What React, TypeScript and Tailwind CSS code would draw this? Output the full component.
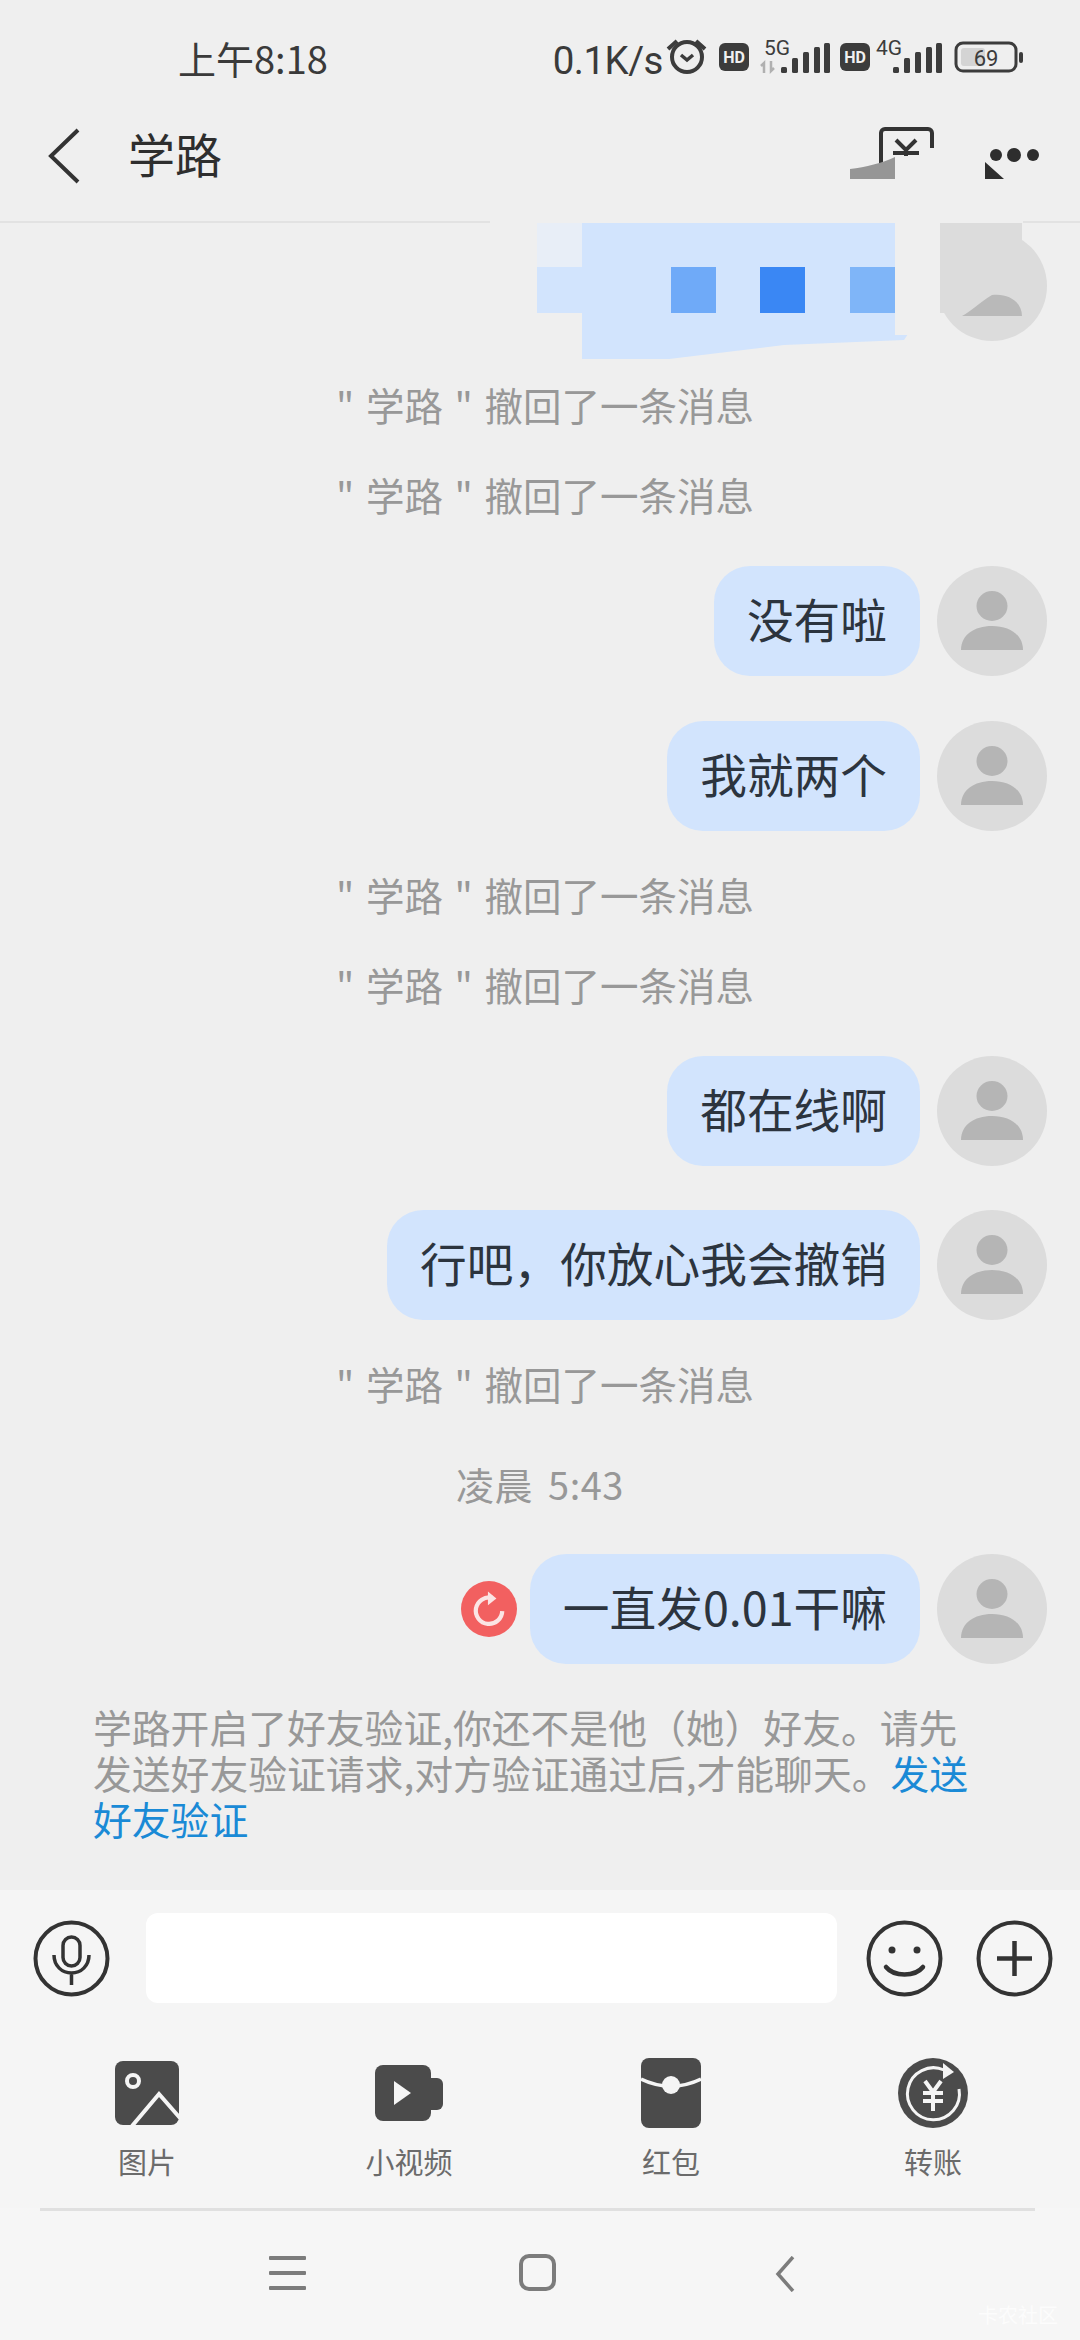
const font = { fontFamily: '"Noto Sans CJK SC", sans-serif' }

function Avatar() {
  return (
    <div className="flex w-[110px] h-[110px] shrink-0 items-center justify-center rounded-full bg-[#dcdcdc]">
      <svg width="62" height="60" viewBox="0 0 62 60" fill="#b5b5b5">
        <ellipse cx="31" cy="15" rx="15.5" ry="15" />
        <path d="M0 59c0-15 13-24 31-24s31 9 31 24z" />
      </svg>
    </div>
  )
}

function Bubble({ text, mt, retry }: { text: string; mt: string; retry?: boolean }) {
  return (
    <div className={`flex items-center justify-end gap-[17px] pr-[33px] ${mt}`}>
      {retry && (
        <div className="flex w-[56px] h-[56px] items-center justify-center rounded-full bg-[#f26060] mr-[-4px]">
          <svg width="36" height="36" viewBox="0 0 34 34" fill="none" stroke="#fbe4e4" strokeWidth="4">
            <path d="M20 6.5A12.5 12.5 0 1 0 29.5 19" />
            <path d="M16 0.5l8 6.500-8 6.500z" fill="#fbe4e4" stroke="none" />
          </svg>
        </div>
      )}
      <div className="flex h-[110px] items-center rounded-[36px] bg-[#d2e4fd] px-[33px] pb-[6px] text-[46.7px] text-[#2c343e] whitespace-nowrap">
        {text}
      </div>
      <Avatar />
    </div>
  )
}

function SystemNote({ mt }: { mt: string }) {
  return (
    <div className={`flex h-[60px] items-center justify-center pl-[10px] pb-[2px] text-[38.5px] [word-spacing:3px] text-[#989898] whitespace-pre ${mt}`}>
      {'" 学路 " 撤回了一条消息'}
    </div>
  )
}

function Bars({ x }: { x: number }) {
  const bars = [
    [0, 72, 6],
    [11, 63, 15],
    [22, 57, 21],
    [33, 52, 26],
    [43, 48, 30],
  ]
  return (
    <>
      {bars.map(([dx, y, h]) => (
        <rect key={dx} x={x + dx} y={y} width="6" height={h} rx="1.5" fill="#3c3c3c" />
      ))}
    </>
  )
}

function StatusIcons() {
  return (
    <svg width="360" height="48" viewBox="665 40 360 48" fill="none">
      <path d="M669 54l9-8M706 54l-9-8" stroke="#3c3c3c" strokeWidth="4" />
      <circle cx="688" cy="62" r="15" stroke="#3c3c3c" strokeWidth="4" />
      <path d="M682 60l6 5 6-5" stroke="#3c3c3c" strokeWidth="3.5" />
      <rect x="720" y="48" width="30" height="28" rx="6" fill="#3c3c3c" />
      <text x="735" y="68" textAnchor="middle" fontSize="16" fontWeight="700" fill="#f0f0f0" fontFamily="Roboto, sans-serif">HD</text>
      <text x="765" y="60" fontSize="21" fill="#3c3c3c" fontFamily="Roboto, sans-serif">5G</text>
      <path d="M765 78v-10l-3 3M772 66v10l3-3" stroke="#b0b0b0" strokeWidth="2.5" />
      <Bars x={782} />
      <rect x="841" y="48" width="30" height="28" rx="6" fill="#3c3c3c" />
      <text x="856" y="68" textAnchor="middle" fontSize="16" fontWeight="700" fill="#f0f0f0" fontFamily="Roboto, sans-serif">HD</text>
      <text x="877" y="60" fontSize="21" fill="#3c3c3c" fontFamily="Roboto, sans-serif">4G</text>
      <Bars x={894} />
      <rect x="957" y="48" width="60" height="28" rx="7" stroke="#3c3c3c" strokeWidth="3" />
      <rect x="962" y="53" width="24" height="18" rx="3" fill="#d4d4d4" />
      <text x="987" y="71" textAnchor="middle" fontSize="22" fill="#3c3c3c" fontFamily="Roboto, sans-serif">69</text>
      <rect x="1020" y="57" width="4" height="11" rx="2" fill="#3c3c3c" />
    </svg>
  )
}

function Redaction() {
  return (
    <svg className="absolute left-[537px] top-0" width="510" height="136" viewBox="537 224 510 136">
      <circle cx="992" cy="287" r="55" fill="#dcdcdc" />
      <path d="M582 224h313v112l17-7-8 12-120 5-115 14h-87z" fill="#d2e4fd" />
      <rect x="537" y="224" width="45" height="44" fill="#e8eef7" />
      <rect x="537" y="268" width="45" height="46" fill="#d2e4fd" />
      <rect x="671" y="268" width="45" height="46" fill="#6faaf8" />
      <rect x="760" y="268" width="45" height="46" fill="#3a87f4" />
      <rect x="850" y="268" width="45" height="46" fill="#7fb5f8" />
      <rect x="895" y="224" width="45" height="112" fill="#efefef" />
      <path d="M940 224h82v90h-82z" fill="#dcdcdc" />
      <path d="M962 317c8-4 18-14 30-21 18-2 30 8 30 21z" fill="#b9b9b9" />
    </svg>
  )
}

function Tool({ label, children }: { label: string; children: React.ReactNode }) {
  return (
    <div className="flex flex-col items-center">
      <div className="flex h-[72px] items-center justify-center">{children}</div>
      <div className="mt-[12px] text-[29px] leading-[40px] text-[#6b6b6b]">{label}</div>
    </div>
  )
}

export default function App() {
  return (
    <div className="relative flex flex-col w-[1080px] h-[2340px] overflow-hidden bg-[#efefef]" style={font}>
      {/* status bar */}
      <div className="flex h-[100px] items-start pt-[35px] pr-[56px] pl-[178px] text-[#3a3a3a]">
        <span className="text-[38px] leading-[46px] whitespace-nowrap">上午8:18</span>
        <span className="ml-auto mt-[3px] text-[38.5px] leading-[46px] tracking-[-0.5px]" style={{ fontFamily: 'Roboto, sans-serif' }}>0.1K/s</span>
        <span className="ml-[1px] block">
          <StatusIcons />
        </span>
      </div>

      {/* title bar */}
      <div className="relative flex h-[123px] items-center border-b-[2px] border-[#e2e2e2] pl-[48px]">
        <svg className="mt-[-10px]" width="32" height="56" viewBox="0 0 32 56" fill="none" stroke="#333" strokeWidth="4">
          <path d="M30 2L3 28l27 26" />
        </svg>
        <span className="ml-[48px] mt-[-14px] text-[47px] text-[#2e2e2e]">学路</span>
        <svg className="ml-auto mr-[4px] mt-[-16px]" width="90" height="58" viewBox="848 124 90 58" fill="none">
          <path d="M881 165v-32a4 4 0 0 1 4-4h43a4 4 0 0 1 4 4v15" stroke="#333" strokeWidth="4" />
          <path d="M896 140l10 10 10-10M893 153h26M906 148v8" stroke="#333" strokeWidth="4" />
          <path d="M850 179v-10c16-2 32-6 45-12v22z" fill="#969696" />
        </svg>
        <svg className="ml-[42px] mr-[38px] mt-[8px]" width="58" height="34" viewBox="984 148 58 34">
          <circle cx="996" cy="155" r="6" fill="#2e2e2e" />
          <circle cx="1014" cy="155" r="7" fill="#2e2e2e" />
          <circle cx="1033" cy="155" r="6" fill="#2e2e2e" />
          <path d="M985 162l19 17h-19z" fill="#2e2e2e" />
        </svg>
        <div className="absolute left-[490px] bottom-[-2px] w-[533px] h-[2px] bg-[#efefef]" />
      </div>

      {/* messages */}
      <div className="flex flex-1 flex-col">
        <div className="relative h-[134px] shrink-0">
          <Redaction />
        </div>
        <SystemNote mt="mt-[19px]" />
        <SystemNote mt="mt-[30px]" />
        <Bubble text="没有啦" mt="mt-[40px]" />
        <Bubble text="我就两个" mt="mt-[45px]" />
        <SystemNote mt="mt-[35px]" />
        <SystemNote mt="mt-[30px]" />
        <Bubble text="都在线啊" mt="mt-[40px]" />
        <Bubble text="行吧，你放心我会撤销" mt="mt-[44px]" />
        <SystemNote mt="mt-[35px]" />
        <div className="mt-[41px] flex h-[60px] items-center justify-center pb-[6px] text-[38px] tracking-[0.5px] [word-spacing:6px] text-[#989898]">凌晨 5:43</div>
        <Bubble text="一直发0.01干嘛" mt="mt-[38px]" retry />
        <p className="mt-[39px] w-[985px] pl-[93px] text-[38.8px] leading-[46px] text-[#989898]">
          学路开启了好友验证,你还不是他（她）好友。请先发送好友验证请求,对方验证通过后,才能聊天。
          <span className="text-[#1a8ad6]">发送好友验证</span>
        </p>
      </div>

      {/* composer */}
      <div className="h-[318px] shrink-0 bg-[#f5f5f5]">
        <div className="flex items-center pt-[23px] pl-[33px]">
          <svg width="77" height="77" viewBox="0 0 77 77" fill="none" stroke="#333" strokeWidth="4">
            <circle cx="38.5" cy="38.5" r="36" />
            <rect x="30" y="17" width="17" height="29" rx="8.5" strokeWidth="3.5" />
            <path d="M21 35c0 11 8 18 17.500 18S56 46 56 35M38.500 53v12" strokeWidth="3.5" />
          </svg>
          <div className="ml-[36px] h-[90px] w-[691px] rounded-[12px] bg-white" />
          <svg className="ml-[29px]" width="77" height="77" viewBox="0 0 77 77" fill="none" stroke="#333" strokeWidth="4">
            <circle cx="38.5" cy="38.5" r="36" />
            <circle cx="26" cy="30" r="3.500" fill="#333" stroke="none" />
            <circle cx="51" cy="30" r="3.500" fill="#333" stroke="none" />
            <path d="M20 47c8 10 29 10 37 0" strokeLinecap="round" strokeWidth="4.500" />
          </svg>
          <svg className="ml-[33px]" width="77" height="77" viewBox="0 0 77 77" fill="none" stroke="#333" strokeWidth="4">
            <circle cx="38.5" cy="38.500" r="36" />
            <path d="M21 38.500h35M38.500 21v35" strokeWidth="4.500" />
          </svg>
        </div>

        <div className="mt-[54px] grid w-[1064px] grid-cols-4 pl-[16px]">
          <Tool label="图片">
            <svg width="66" height="66" viewBox="0 0 66 66">
              <rect x="1" y="1" width="64" height="64" rx="8" fill="#4b4b4b" />
              <circle cx="19" cy="21" r="6" fill="none" stroke="#f5f5f5" strokeWidth="4" />
              <path d="M18 66l27-32 21 24" fill="none" stroke="#f5f5f5" strokeWidth="4" />
            </svg>
          </Tool>
          <Tool label="小视频">
            <svg width="68" height="58" viewBox="0 0 68 58" fill="#4b4b4b">
              <rect x="0" y="1" width="56" height="56" rx="8" />
              <path d="M54 14h8a6 6 0 0 1 6 6v20a6 6 0 0 1-6 6h-8z" />
              <path d="M19 17l17 12-17 12z" fill="#f5f5f5" />
            </svg>
          </Tool>
          <Tool label="红包">
            <svg width="60" height="70" viewBox="0 0 60 70">
              <rect x="0" y="0" width="60" height="70" rx="8" fill="#4b4b4b" />
              <path d="M0 21c10 5 20 7 30 7s20-2 30-7" fill="none" stroke="#f5f5f5" strokeWidth="3.500" />
              <circle cx="30" cy="27" r="9" fill="#f5f5f5" />
            </svg>
          </Tool>
          <Tool label="转账">
            <svg width="72" height="72" viewBox="0 0 72 72" fill="none">
              <circle cx="36" cy="36" r="35" fill="#4b4b4b" />
              <path d="M47 13A26 26 0 1 0 62 32" stroke="#f5f5f5" strokeWidth="3" />
              <path d="M46 6l11 9-11 7z" fill="#f5f5f5" />
              <path d="M28 24l8 11 8-11M26 36h20M26 44h20M36 35v19" stroke="#f5f5f5" strokeWidth="4" />
            </svg>
          </Tool>
        </div>
      </div>

      {/* nav bar */}
      <div className="relative flex h-[132px] shrink-0 items-start justify-between bg-[#f6f6f6] pt-[48px] pl-[269px] pr-[285px]">
        <div className="absolute left-[40px] right-[45px] top-0 h-[3px] bg-[#e0e0e0]" />
        <svg width="37" height="34" viewBox="0 0 37 34" fill="#7c7c7c">
          <rect width="37" height="4" y="0" rx="1" />
          <rect width="37" height="4" y="15" rx="1" />
          <rect width="37" height="4" y="30" rx="1" />
        </svg>
        <svg className="mt-[-2px] mr-[6px]" width="37" height="37" viewBox="0 0 37 37" fill="none">
          <rect x="2" y="2" width="33" height="33" rx="8" stroke="#7c7c7c" strokeWidth="4" />
        </svg>
        <svg width="20" height="36" viewBox="0 0 20 36" fill="none">
          <path d="M18 1L3 18l15 17" stroke="#7c7c7c" strokeWidth="3.500" />
        </svg>
        <span className="absolute right-[22px] bottom-[10px] text-[20px] text-white/70">卡农社区</span>
      </div>
    </div>
  )
}
